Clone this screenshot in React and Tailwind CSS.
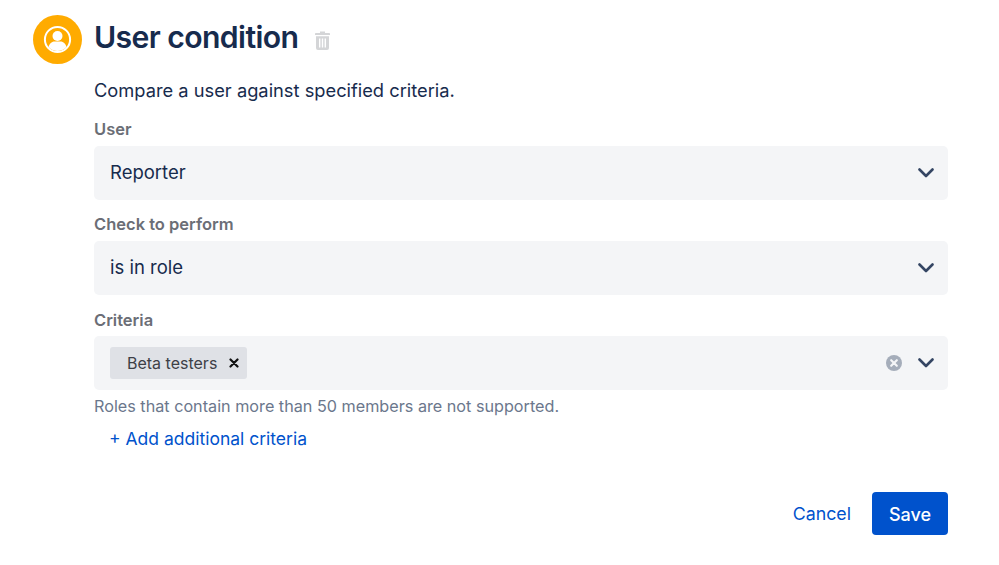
import React from "react";

const Chevron = () => (
  <svg width="16" height="10" viewBox="0 0 16 10" fill="none" className="shrink-0">
    <path d="M1.5 1.5L8 8l6.5-6.5" stroke="#344563" strokeWidth="2.6" strokeLinecap="round" strokeLinejoin="round" />
  </svg>
);

const UserIcon = () => (
  <svg width="49" height="49" viewBox="0 0 49 49" className="shrink-0">
    <circle cx="24.5" cy="24.5" r="24.5" fill="#FFAB00" />
    <circle cx="24.5" cy="24.5" r="12.6" fill="none" stroke="#fff" strokeWidth="2" />
    <circle cx="24.5" cy="21" r="5" fill="#fff" />
    <path d="M15.5 32c1-3.8 4-5.5 6-5.5h6c2 0 5 1.700 6 5.500c-2.400 2.500-5.500 4-9 4s-6.600-1.500-9-4z" fill="#fff" />
  </svg>
);

const TrashIcon = () => (
  <svg width="15" height="20" viewBox="0 0 15 20" className="shrink-0">
    <path d="M5 1.500h5v1.500h4.200a.8.8 0 0 1 .8.800V5H0V3.800A.8.8 0 0 1 .8 3H5z" fill="#D4D5D7" />
    <path fillRule="evenodd" d="M1 6.200h13V18a2 2 0 0 1-2 2H3a2 2 0 0 1-2-2zM4 8.500v9h1.400v-9zm2.800 0v9h1.400v-9zm2.800 0v9H11v-9z" fill="#D4D5D7" />
  </svg>
);

const Select = ({ value }) => (
  <div className="flex h-[54px] items-center justify-between rounded-[5px] bg-[#F4F5F7] pl-4 pr-[14px] text-[18.5px] text-[#172B4D]">
    <span>{value}</span>
    <Chevron />
  </div>
);

const FieldLabel = ({ children, className }) => (
  <div className={"text-[16.5px] leading-[20px] font-semibold text-[#6B6E76] " + className}>{children}</div>
);

export default function App() {
  return (
    <div className="h-[565px] w-[999px] overflow-hidden bg-white pt-[15px] pl-[33px] pr-[51px] font-['Inter',sans-serif]">
      <div className="flex items-center">
        <UserIcon />
        <h1 className="relative top-[-2px] ml-3 text-[30.2px] leading-[49px] font-semibold tracking-[-0.6px] text-[#172B4D]">User condition</h1>
        <span className="ml-[17px]"><TrashIcon /></span>
      </div>

      <div className="ml-[61px]">
        <p className="mt-[14px] text-[18.3px] leading-[24px] text-[#172B4D]">Compare a user against specified criteria.</p>

        <div className="mt-[17px]">
          <FieldLabel className="mb-[7px]">User</FieldLabel>
          <Select value="Reporter" />
        </div>
        <div className="mt-[14px]">
          <FieldLabel className="mb-[7px]">Check to perform</FieldLabel>
          <Select value="is in role" />
        </div>
        <div className="mt-[15px]">
          <FieldLabel className="mb-[6px]">Criteria</FieldLabel>
          <div className="flex h-[54px] items-center rounded-[5px] bg-[#F4F5F7] pl-4 pr-[14px]">
            <div className="flex h-[32px] items-center rounded-[3px] bg-[#DFE1E6] pl-[17px] pr-[8px]">
              <span className="text-[16px] text-[#3D4046]">Beta testers</span>
              <svg width="10" height="10" viewBox="0 0 10 10" className="ml-[12px]">
                <path d="M1.500 1.500l7 7m0-7l-7 7" stroke="#111" strokeWidth="2.200" strokeLinecap="round" />
              </svg>
            </div>
            <div className="flex-1" />
            <svg width="16" height="16" viewBox="0 0 16 16" className="mr-4">
              <circle cx="8" cy="8" r="8" fill="#A5ADBA" />
              <path d="M5.200 5.200l5.600 5.600m0-5.600l-5.600 5.600" stroke="#F4F5F7" strokeWidth="2.200" strokeLinecap="round" />
            </svg>
            <Chevron />
          </div>
          <p className="mt-[6px] text-[16.2px] leading-[20px] text-[#6B778C]">Roles that contain more than 50 members are not supported.</p>
        </div>

        <div className="mt-[11px] ml-[15px] text-[17.5px] leading-[24px] text-[#0052CC]">+ Add additional criteria</div>

        <div className="mt-[41px] flex items-center justify-end">
          <span className="mr-[21px] pt-[2px] text-[17.8px] text-[#0052CC]">Cancel</span>
          <button className="h-[43px] w-[76px] rounded-[4px] bg-[#0052CC] pt-[2px] text-[18px] font-medium text-white">Save</button>
        </div>
      </div>
    </div>
  );
}
